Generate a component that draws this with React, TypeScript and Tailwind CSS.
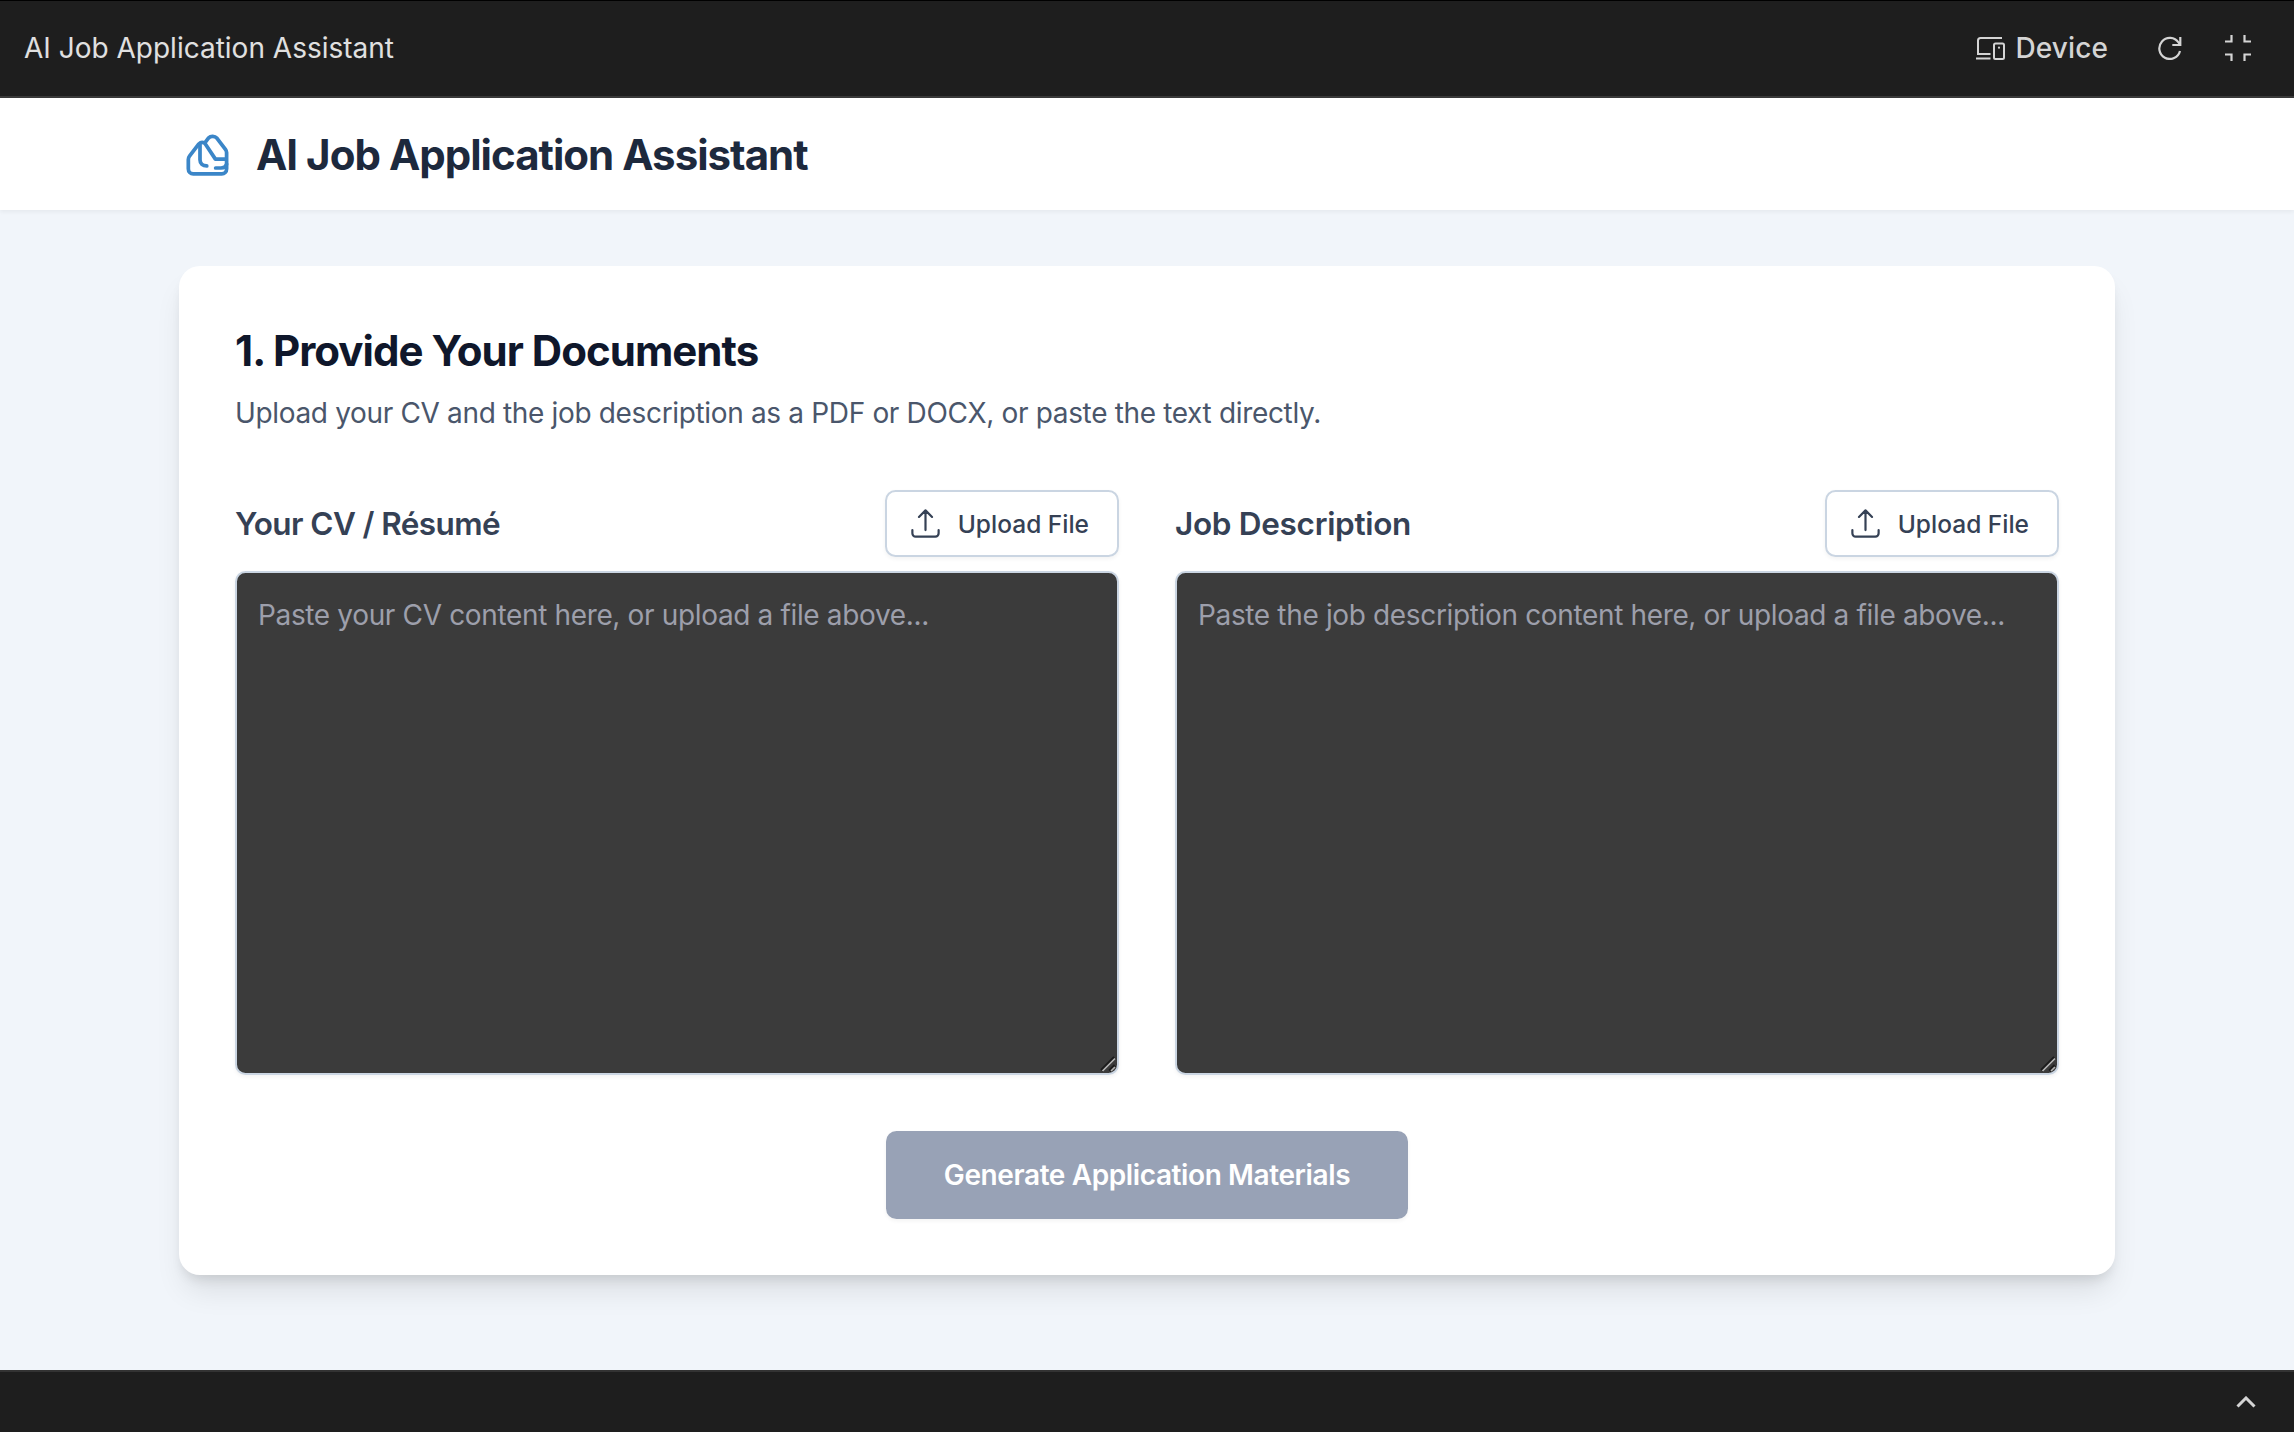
import React from "react";

function LogoIcon() {
  return (
    <svg className="h-[56px] w-[56px] shrink-0 text-[#3b86c8]" viewBox="0 0 24 24" fill="none" stroke="currentColor" strokeWidth="1.6" strokeLinecap="round" strokeLinejoin="round">
      <path d="M11 7.4C10.2 6.900 9.200 7 8.500 7.700L4.500 12.900C4.200 13.300 4 13.800 4 14.400V18.300C4 19.600 4.900 20.500 6.100 20.500H18.300C19.500 20.500 20.400 19.600 20.400 18.300V11.400C20.400 10.900 20.200 10.400 19.900 10L16.300 5.300C15.300 4.200 13.600 4.200 12.600 5.200L11 7.300L15.600 14.200H20.200" />
      <path d="M9 7.800V14.500C9 16.200 10.200 17.100 11.900 17.100" />
      <path d="M15.700 18H18C19.200 18 20.100 17.500 20.400 16.400" />
    </svg>
  );
}

function UploadIcon() {
  return (
    <svg className="-ml-[7px] mr-[15px] h-[35px] w-[35px]" viewBox="0 0 24 24" fill="none" stroke="currentColor" strokeWidth="1.5" strokeLinecap="round" strokeLinejoin="round">
      <path d="M3 16.5v2.25A2.25 2.25 0 0 0 5.25 21h13.5A2.25 2.25 0 0 0 21 18.75V16.5m-13.5-9L12 3m0 0 4.5 4.5M12 3v13.5" />
    </svg>
  );
}

function DevicesIcon() {
  return (
    <svg className="h-[24px] w-[30px]" viewBox="0 0 30 24" fill="none" stroke="currentColor" strokeWidth="2">
      <path d="M27 2H5.5C4 2 3 3 3 4.5V18H15.500M1 22.500H15.500" />
      <rect x="19" y="7.500" width="10" height="15.500" rx="1.500" />
      <circle cx="24" cy="11.700" r="1.100" fill="currentColor" stroke="none" />
    </svg>
  );
}

function ReloadIcon() {
  return (
    <svg className="h-[24px] w-[24px]" viewBox="0 0 24 24" fill="none" stroke="currentColor" strokeWidth="2.200">
      <path d="M22 15A10.500 10.500 0 1 1 20.500 6.500L22 8.700M22.300 1V9H14.300" />
    </svg>
  );
}

function CollapseIcon() {
  return (
    <svg className="h-[26px] w-[26px]" viewBox="0 0 26 26" fill="none" stroke="currentColor" strokeWidth="2.200">
      <path d="M6.500 0V6.500H0M19.500 0V6.500H26M6.500 26V19.500H0M19.500 26V19.500H26" />
    </svg>
  );
}

function ResizeGrip() {
  return (
    <svg className="pointer-events-none absolute bottom-[2px] right-[2px] h-[18px] w-[18px]" viewBox="0 0 18 18" fill="none">
      <path d="M2.500 15.500L15.500 2.500M10.500 16L16 10.500" stroke="#1c1c1c" strokeWidth="3.200" />
      <path d="M3.500 16L16 3.500M12 16L16 12" stroke="#b5b5b5" strokeWidth="1.700" />
    </svg>
  );
}

type FieldProps = { label: string; labelTracking: string; placeholder: string };

function DocumentField({ label, labelTracking, placeholder }: FieldProps) {
  return (
    <div className="flex flex-col">
      <div className="mb-[14px] flex items-center justify-between">
        <label className={`text-[31.5px] font-semibold leading-[49px] text-[#354155] ${labelTracking}`}>{label}</label>
        <button className="flex items-center rounded-[10.5px] border-2 border-slate-300 bg-white px-[28px] py-[14px] text-[24.5px] font-medium leading-[35px] text-[#354155] shadow-[0_2px_4px_rgba(0,0,0,0.05)]">
          <UploadIcon />
          <span className="translate-y-px">Upload File</span>
        </button>
      </div>
      <div className="relative h-[504px]">
        <textarea
          className="block h-full w-full resize-none rounded-[10.5px] border-2 border-slate-300 bg-[#3b3b3b] p-[21px] text-[28px] leading-[42px] tracking-[-0.35px] text-white shadow-[0_2px_4px_rgba(0,0,0,0.05)] placeholder:text-[#9d9fab]"
          placeholder={placeholder}
        />
        <ResizeGrip />
      </div>
    </div>
  );
}

export default function App() {
  return (
    <div className="flex h-[1432px] w-full flex-col overflow-hidden bg-[#f1f5fa] font-['Inter',sans-serif]">
      <div className="flex h-[98px] shrink-0 items-center justify-between border-b-2 border-t border-b-[#3a3a3a] border-t-black bg-[#1e1e1e] pb-px pl-[24px] pr-[43px] text-[28px] text-[#e0e0e0]">
        <span>AI Job Application Assistant</span>
        <div className="flex items-center text-[#d4d4d4]">
          <DevicesIcon />
          <span className="ml-[11px] font-medium tracking-[0.1px]">Device</span>
          <div className="ml-[50px] flex items-center gap-[43px]">
            <ReloadIcon />
            <CollapseIcon />
          </div>
        </div>
      </div>
      <header className="relative shrink-0 bg-white shadow-[0_2px_4px_rgba(0,0,0,0.05)]">
        <div className="mx-auto flex h-[112px] w-[2048px] items-center gap-[21px] px-[56px]">
          <LogoIcon />
          <h1 className="translate-y-px text-[42px] font-bold leading-[56px] tracking-[-0.99px] text-slate-800">AI Job Application Assistant</h1>
        </div>
      </header>
      <main className="mx-auto w-[2048px] flex-1 p-[56px]">
        <section className="rounded-[21px] bg-white p-[56px] shadow-[0_20px_30px_-6px_rgba(0,0,0,0.1),0_8px_12px_-4px_rgba(0,0,0,0.1)]">
          <h2 className="translate-y-px text-[42px] font-bold leading-[56px] tracking-[-0.96px] text-slate-900">1. Provide Your Documents</h2>
          <p className="mt-[14px] text-[28px] leading-[42px] tracking-[-0.34px] text-[#4a566b]">
            Upload your CV and the job description as a PDF or DOCX, or paste the text directly.
          </p>
          <div className="mt-[56px] grid grid-cols-2 gap-[56px]">
            <DocumentField label="Your CV / Résumé" labelTracking="tracking-[-0.6px]" placeholder="Paste your CV content here, or upload a file above..." />
            <DocumentField label="Job Description" labelTracking="tracking-[-0.3px]" placeholder="Paste the job description content here, or upload a file above..." />
          </div>
          <div className="mt-[56px] flex justify-center">
            <button className="rounded-[10.5px] border-2 border-transparent bg-[#98a2b6] px-[56px] py-[21px] text-[28px] font-semibold leading-[42px] tracking-[-0.39px] text-white shadow-[0_2px_4px_rgba(0,0,0,0.05)]">
              Generate Application Materials
            </button>
          </div>
        </section>
      </main>
      <footer className="relative flex h-[62px] shrink-0 items-center justify-end border-t-2 border-[#333333] bg-[#1e1e1e] pr-[38px] text-[#d4d4d4]">
        <svg className="h-[12px] w-[20px]" viewBox="0 0 20 12" fill="none" stroke="currentColor" strokeWidth="3">
          <path d="M1.500 10.500L10 2L18.500 10.500" />
        </svg>
      </footer>
    </div>
  );
}
